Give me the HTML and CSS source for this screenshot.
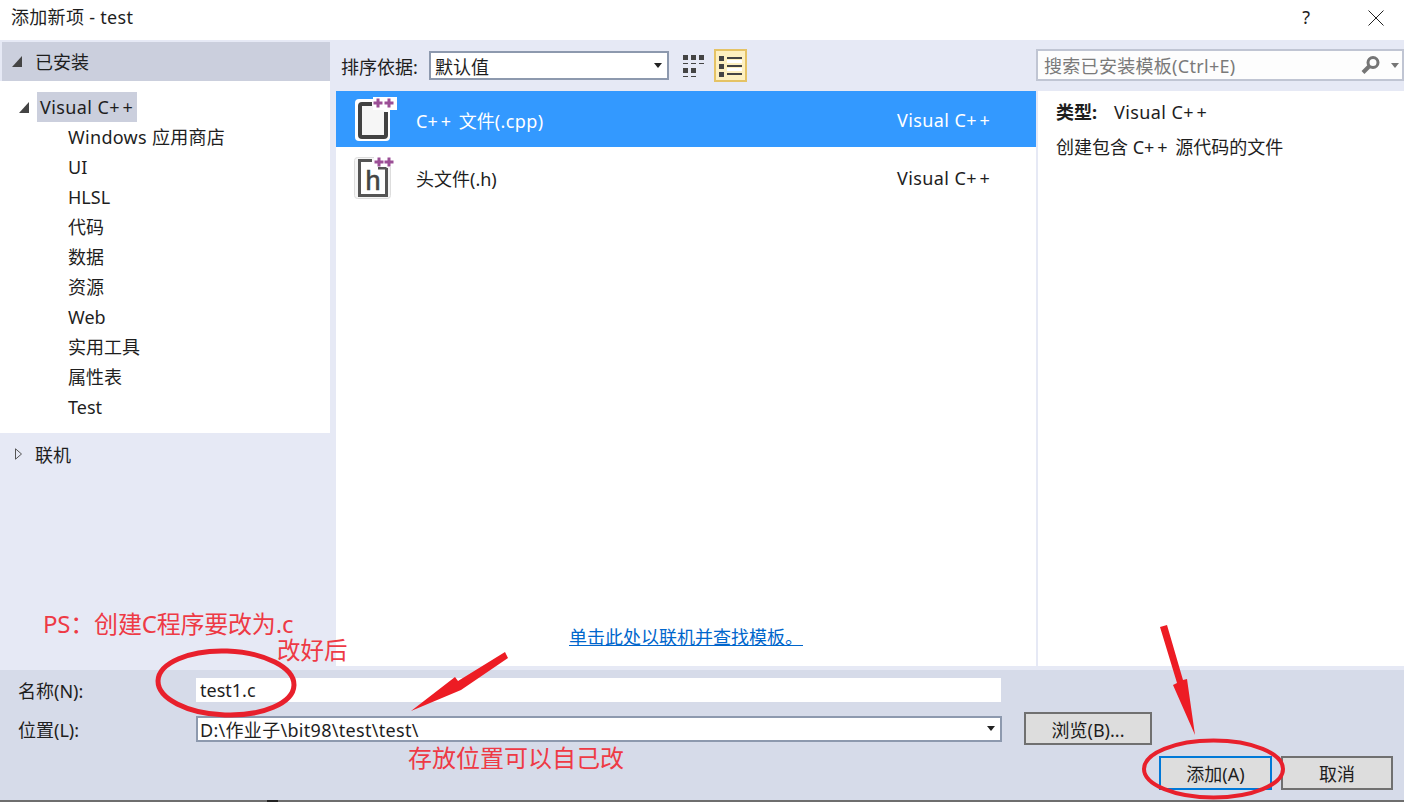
FILE: index.html
```html
<!DOCTYPE html>
<html lang="zh-CN">
<head>
    <meta charset="UTF-8">
    <title>添加新项 - test</title>
    <link rel="stylesheet" href="styles.css">
</head>
<body>
    <div class="titlebar">
        <span class="title">添加新项 - test</span>
        <span class="help">?</span>
        <svg class="close" width="16" height="16" viewBox="0 0 16 16"><path d="M.5.5l15 15M15.500.5l-15 15" stroke="#222" fill="none"/></svg>
    </div>

    <div class="main">
        <div class="sidebar">
            <div class="side-head">
                <svg class="tri" width="10" height="11" viewBox="0 0 10 11"><path d="M10 0v11H0z" fill="#444"/></svg>
                <span>已安装</span>
            </div>
            <div class="tree">
                <div class="tree-root">
                    <svg class="tri" width="10" height="11" viewBox="0 0 10 11"><path d="M10 0v11H0z" fill="#444"/></svg>
                    <span class="tree-selected vc">Visual C<span class="pp">++</span></span>
                </div>
                <div class="tree-item wide">Windows 应用商店</div>
                <div class="tree-item">UI</div>
                <div class="tree-item">HLSL</div>
                <div class="tree-item">代码</div>
                <div class="tree-item">数据</div>
                <div class="tree-item">资源</div>
                <div class="tree-item">Web</div>
                <div class="tree-item">实用工具</div>
                <div class="tree-item">属性表</div>
                <div class="tree-item">Test</div>
            </div>
            <div class="side-online">
                <svg class="tri-open" width="7" height="12" viewBox="0 0 7 12"><path d="M.5.8l6 5.200-6 5.200z" fill="none" stroke="#555"/></svg>
                <span>联机</span>
            </div>
        </div>

        <div class="content">
            <div class="toolbar">
                <span class="sort-label">排序依据:</span>
                <div class="select sort-select">
                    <span>默认值</span>
                    <i class="caret"></i>
                </div>
                <svg class="view-grid" width="22" height="22" viewBox="0 0 22 22" fill="#444">
                    <rect x="0" y="0" width="5" height="5"/><rect x="8" y="0" width="5" height="5"/><rect x="16" y="0" width="5" height="5"/>
                    <rect x="0" y="8" width="5" height="1"/><rect x="8" y="8" width="5" height="1"/><rect x="16" y="8" width="5" height="1"/>
                    <rect x="0" y="13" width="5" height="5"/><rect x="8" y="13" width="5" height="5"/>
                    <rect x="0" y="21" width="5" height="1"/><rect x="8" y="21" width="5" height="1"/>
                </svg>
                <div class="view-list">
                    <svg width="23" height="22" viewBox="0 0 23 22" fill="#444">
                        <rect x="0" y="1" width="5" height="5"/><rect x="0" y="9" width="5" height="5"/><rect x="0" y="17" width="5" height="5"/>
                        <rect x="8" y="2" width="15" height="2"/><rect x="8" y="10" width="15" height="2"/><rect x="8" y="18" width="15" height="2"/>
                        <rect x="8" y="5" width="15" height="3" fill="#fff"/><rect x="8" y="13" width="15" height="3" fill="#fff"/>
                    </svg>
                </div>
                <div class="search">
                    <span class="wide">搜索已安装模板(Ctrl+E)</span>
                    <svg width="20" height="20" viewBox="0 0 20 20"><circle cx="12" cy="7.500" r="5" fill="none" stroke="#757575" stroke-width="3"/><path d="M8 11.500l-6 6" stroke="#757575" stroke-width="4" fill="none"/></svg>
                    <i class="caret caret-grey"></i>
                </div>
            </div>

            <div class="panels">
                <div class="list">
                    <div class="row row-active">
                        <svg class="row-icon" width="44" height="46" viewBox="354 97 44 46">
                            <rect x="355" y="99" width="35" height="42" rx="4" fill="#fff"/>
                            <path d="M372 104H362a2 2 0 0 0-2 2v29a2 2 0 0 0 2 2h22a2 2 0 0 0 2-2V112" fill="#f6f6f6" stroke="#424242" stroke-width="4"/>
                            <rect x="373" y="97" width="24" height="13" fill="#fff"/>
                            <path d="M378 98.500v9M373.500 103h9M389 98.500v9M384.500 103h9" stroke="#9b4f96" stroke-width="3" fill="none"/>
                        </svg>
                        <span class="row-name">C<span class="pp">++</span> 文件<span class="vc">(.cpp)</span></span>
                        <span class="row-type vc">Visual C<span class="pp">++</span></span>
                    </div>
                    <div class="row">
                        <svg class="row-icon" width="44" height="46" viewBox="354 155 44 46">
                            <rect x="354.500" y="157.500" width="36" height="41" rx="3" fill="#f6f6f6" stroke="#ddd"/>
                            <path d="M372 160.500H359.500v35h27V168M378 168h8.500" fill="#fff" stroke="#555" stroke-width="3"/>
                            <text class="icon-h" x="373" y="190" text-anchor="middle">h</text>
                            <rect x="374" y="156" width="21" height="11" fill="#fff"/>
                            <path d="M379 157.500v9M374.500 162h9M389 157.500v9M384.500 162h9" stroke="#9b4f96" stroke-width="3" fill="none"/>
                        </svg>
                        <span class="row-name">头文件(.h)</span>
                        <span class="row-type vc">Visual C<span class="pp">++</span></span>
                    </div>
                    <a class="online-link" href="#">单击此处以联机并查找模板。</a>
                </div>
                <div class="details">
                    <div class="detail-type"><b>类型:</b><span class="type-value vc">Visual C<span class="pp">++</span></span></div>
                    <div class="detail-desc">创建包含 C<span class="pp">++</span> 源代码的文件</div>
                </div>
            </div>
        </div>
    </div>

    <div class="footer">
        <div class="field field-name">
            <label>名称(N):</label>
            <div class="name-input">test1.c</div>
        </div>
        <div class="field field-path">
            <label>位置(L):</label>
            <div class="select path-select">
                <span class="wide">D:\作业子\bit98\test\test\</span>
                <i class="caret"></i>
            </div>
            <button class="btn btn-browse">浏览(B)...</button>
        </div>
        <div class="actions">
            <button class="btn btn-add">添加(A)</button>
            <button class="btn btn-cancel">取消</button>
        </div>
    </div>

    <!-- red notes drawn on top of the screenshot -->
    <div class="note note-ps">PS：创建C程序要改为.c</div>
    <div class="note note-done">改好后</div>
    <div class="note note-path">存放位置可以自己改</div>
    <svg class="marks" width="1404" height="802" viewBox="0 0 1404 802">
        <ellipse cx="226" cy="683" rx="68" ry="32" transform="rotate(2 226 683)" fill="none" stroke="#e8202c" stroke-width="5"/>
        <ellipse cx="1213.500" cy="769" rx="69.500" ry="28.500" fill="none" stroke="#e8202c" stroke-width="4"/>
        <polygon points="505,652 508,658 461,690 411,711 455,677 458,681" fill="#ed1c24"/>
        <polygon points="1160,627 1167,625 1183,680 1187,679 1195,735 1173,685 1177,683" fill="#ed1c24"/>
        <rect x="267" y="800" width="11" height="2" fill="#222"/>
    </svg>
</body>
</html>
```

FILE: styles.css
```css
html, body {
    margin: 0;
    height: 802px;
    overflow: hidden;
}
body {
    position: relative;
    display: flex;
    flex-direction: column;
    background: #e6e9f5;
    color: #1e1e1e;
    font-family: "Noto Sans", "Noto Sans CJK SC", sans-serif;
    font-size: 18px;
}
.vc {
    letter-spacing: .4px;
}
.pp {
    letter-spacing: 3px;
}
.wide {
    letter-spacing: .3px;
}

.titlebar {
    height: 40px;
    flex: none;
    background: #fff;
    display: flex;
    align-items: center;
    padding: 0 20px 5px 11px;
    box-sizing: border-box;
}
.title {
    flex: 1;
    margin-bottom: 3px;
    letter-spacing: .3px;
}
.help {
    margin-right: 58px;
    margin-bottom: 2px;
}

.main {
    flex: none;
    height: 626px;
    display: flex;
}
.sidebar {
    width: 330px;
    margin-right: 6px;
    padding-top: 2px;
}
.side-head {
    height: 39px;
    margin-left: 2px;
    background: #cbcfdd;
    display: flex;
    align-items: center;
    padding-left: 10px;
}
.side-head span {
    margin-left: 13px;
    margin-bottom: 2px;
}
.tree {
    height: 352px;
    box-sizing: border-box;
    padding-top: 11px;
    background: #fff;
}
.tree-root {
    height: 30px;
    display: flex;
    align-items: center;
    padding-left: 19px;
}
.tree-selected {
    margin-left: 8px;
    height: 30px;
    line-height: 30px;
    padding: 0 1px 0 3px;
    background: #cbcfdd;
}
.tree-item {
    height: 30px;
    line-height: 30px;
    padding-left: 68px;
}
.side-online {
    height: 42px;
    display: flex;
    align-items: center;
    padding-left: 15px;
}
.side-online span {
    margin-left: 13px;
}

.content {
    flex: 1;
    display: flex;
    flex-direction: column;
}
.toolbar {
    height: 51px;
    flex: none;
    display: flex;
    align-items: center;
    padding-left: 6px;
    box-sizing: border-box;
}
.sort-label {
    width: 87px;
    margin-left: -1px;
    margin-right: 1px;
}
.select {
    display: flex;
    align-items: center;
    box-sizing: border-box;
    background: #fff;
    border: 2px solid #8d99ae;
    padding-left: 4px;
}
.select span {
    flex: 1;
}
.caret {
    width: 0;
    height: 0;
    margin-right: 5px;
    border-left: 4px solid transparent;
    border-right: 4px solid transparent;
    border-top: 5px solid #222;
}
.caret-grey {
    border-top-color: #757575;
    margin: 0 3px 0 10px;
}
.sort-select {
    width: 240px;
    height: 29px;
}
.view-grid {
    margin-left: 14px;
}
.view-list {
    width: 33px;
    height: 33px;
    margin-left: 9px;
    box-sizing: border-box;
    background: #fdf0c0;
    border: 2px solid #e5c365;
    display: flex;
    align-items: center;
    justify-content: center;
}
.search {
    width: 368px;
    height: 32px;
    margin-left: auto;
    margin-top: -1px;
    box-sizing: border-box;
    background: #fdfdfd;
    border: 2px solid #c0c5d3;
    display: flex;
    align-items: center;
    padding-left: 6px;
    color: #7a7a7a;
}
.search span {
    flex: 1;
}

.panels {
    flex: 1;
    display: flex;
    gap: 2px;
}
.list {
    width: 700px;
    background: #fff;
    display: flex;
    flex-direction: column;
}
.row {
    height: 58px;
    display: flex;
    align-items: center;
    padding-left: 18px;
    padding-top: 4px;
    box-sizing: border-box;
}
.row-active {
    height: 56px;
    padding-top: 2px;
    background: #3399ff;
    color: #fff;
}
.row-icon {
    flex: none;
}
.row-name {
    width: 481px;
    margin-left: 18px;
}
.icon-h {
    font-family: "Liberation Sans", sans-serif;
    font-size: 27px;
    stroke: #444;
    stroke-width: .6px;
    fill: #444;
}
.online-link {
    margin-top: auto;
    margin-bottom: 17px;
    align-self: center;
    color: #0066cc;
}
.details {
    flex: 1;
    background: #fff;
    padding: 7px 18px;
}
.detail-type {
    height: 28px;
}
.type-value {
    margin-left: 17px;
}
.detail-desc {
    margin-top: 7px;
}

.footer {
    flex: none;
    height: 136px;
    box-sizing: border-box;
    border-top: 4px solid #e6e9f5;
    border-bottom: 2px solid #6e6e6e;
    background: #d6dbe9;
    padding-top: 8px;
}
.field {
    display: flex;
    align-items: center;
    padding-left: 18px;
}
.field label {
    width: 178px;
}
.field-name {
    height: 24px;
}
.name-input {
    width: 805px;
    height: 24px;
    line-height: 24px;
    background: #fff;
    padding-left: 4px;
    box-sizing: border-box;
}
.field-path {
    height: 33px;
    margin-top: 10px;
}
.path-select {
    width: 806px;
    height: 26px;
    padding-left: 2px;
}
.btn {
    font: inherit;
    color: inherit;
    box-sizing: border-box;
    background: #dddddd;
    border: 2px solid #707070;
    padding: 0;
}
.btn-browse {
    width: 128px;
    height: 33px;
    margin-left: 22px;
}
.actions {
    display: flex;
    justify-content: flex-end;
    gap: 9px;
    margin-top: 11px;
    padding-right: 11px;
}
.btn-add {
    width: 113px;
    height: 34px;
    border-color: #0078d7;
}
.btn-cancel {
    width: 112px;
    height: 34px;
}

.note {
    position: absolute;
    color: #ee3a45;
    font-size: 24px;
    line-height: 30px;
    white-space: nowrap;
}
.note-ps {
    left: 43px;
    top: 609px;
    letter-spacing: -.2px;
}
.note-done {
    left: 277px;
    top: 635px;
    font-size: 23.500px;
}
.note-path {
    left: 408px;
    top: 743px;
}
.marks {
    position: absolute;
    left: 0;
    top: 0;
    pointer-events: none;
}
```
